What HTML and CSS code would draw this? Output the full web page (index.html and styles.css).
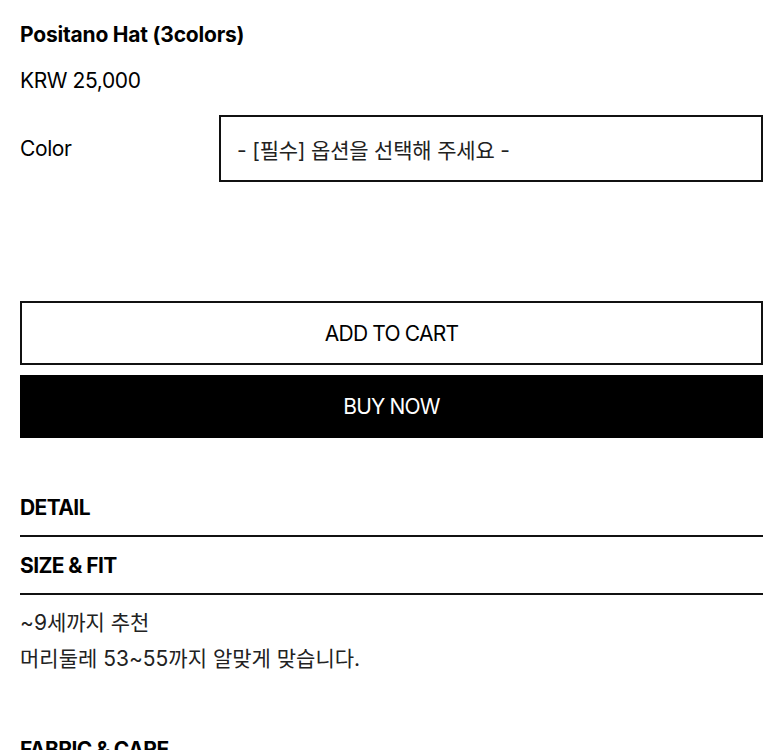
FILE: index.html
```html
<!DOCTYPE html>
<html lang="ko">
<head>
  <meta charset="UTF-8" />
  <title>Positano Hat (3colors)</title>
  <link rel="stylesheet" href="styles.css">
</head>
<body>
  <div class="product">
    <h1 class="name">Positano Hat (3colors)</h1>
    <div class="price">KRW 25,000</div>

    <div class="option">
      <div class="label">Color</div>
      <div class="select">- [필수] 옵션을 선택해 주세요 -</div>
    </div>

    <div class="actions">
      <button class="btn cart">ADD TO CART</button>
      <button class="btn buy">BUY NOW</button>
    </div>

    <div class="info">
      <div class="section">
        <h2>DETAIL</h2>
      </div>
      <div class="section">
        <h2>SIZE &amp; FIT</h2>
      </div>
      <div class="text">
        <p>~9세까지 추천</p>
        <p>머리둘레 53~55까지 알맞게 맞습니다.</p>
      </div>
      <div class="section last">
        <h2>FABRIC &amp; CARE</h2>
      </div>
    </div>
  </div>
</body>
</html>
```

FILE: styles.css
```css
body {
  margin: 0;
  background: #fff;
  color: #000;
  font-family: Inter, "Noto Sans CJK KR", sans-serif;
}

.product {
  padding: 20px 20px 0;
}

.name {
  margin: 0;
  font-size: 21px;
  font-weight: 700;
  line-height: 30px;
  letter-spacing: -0.2px;
}

.price {
  margin-top: 16px;
  font-size: 21px;
  line-height: 30px;
  letter-spacing: -0.4px;
}

.option {
  display: flex;
  align-items: center;
  margin-top: 19px;
}

.label {
  width: 199px;
  font-size: 21px;
  letter-spacing: -0.4px;
}

.select {
  flex: 1;
  height: 63px;
  border: 2px solid #111;
  padding-left: 16px;
  display: flex;
  align-items: center;
  font-size: 21px;
  color: #222;
  letter-spacing: -0.2px;
}

.actions {
  margin-top: 119px;
  display: flex;
  flex-direction: column;
  gap: 10px;
}

.btn {
  height: 64px;
  width: 100%;
  font-family: Inter, sans-serif;
  font-size: 21px;
  letter-spacing: -0.8px;
  cursor: pointer;
}

.cart {
  background: #fff;
  color: #000;
  border: 2px solid #111;
}

.buy {
  height: 63px;
  background: #000;
  color: #fff;
  border: none;
}

.info {
  margin-top: 41px;
}

.section {
  border-bottom: 2px solid #111;
  height: 56px;
  display: flex;
  align-items: center;
}

.section h2 {
  margin: 0;
  font-size: 21px;
  font-weight: 700;
  letter-spacing: -0.6px;
}

.section.last {
  border-bottom: none;
}

.text {
  padding: 10px 0 44px;
}

.text p {
  margin: 0;
  font-size: 21px;
  line-height: 36px;
  color: #222;
  letter-spacing: 0;
}
```
